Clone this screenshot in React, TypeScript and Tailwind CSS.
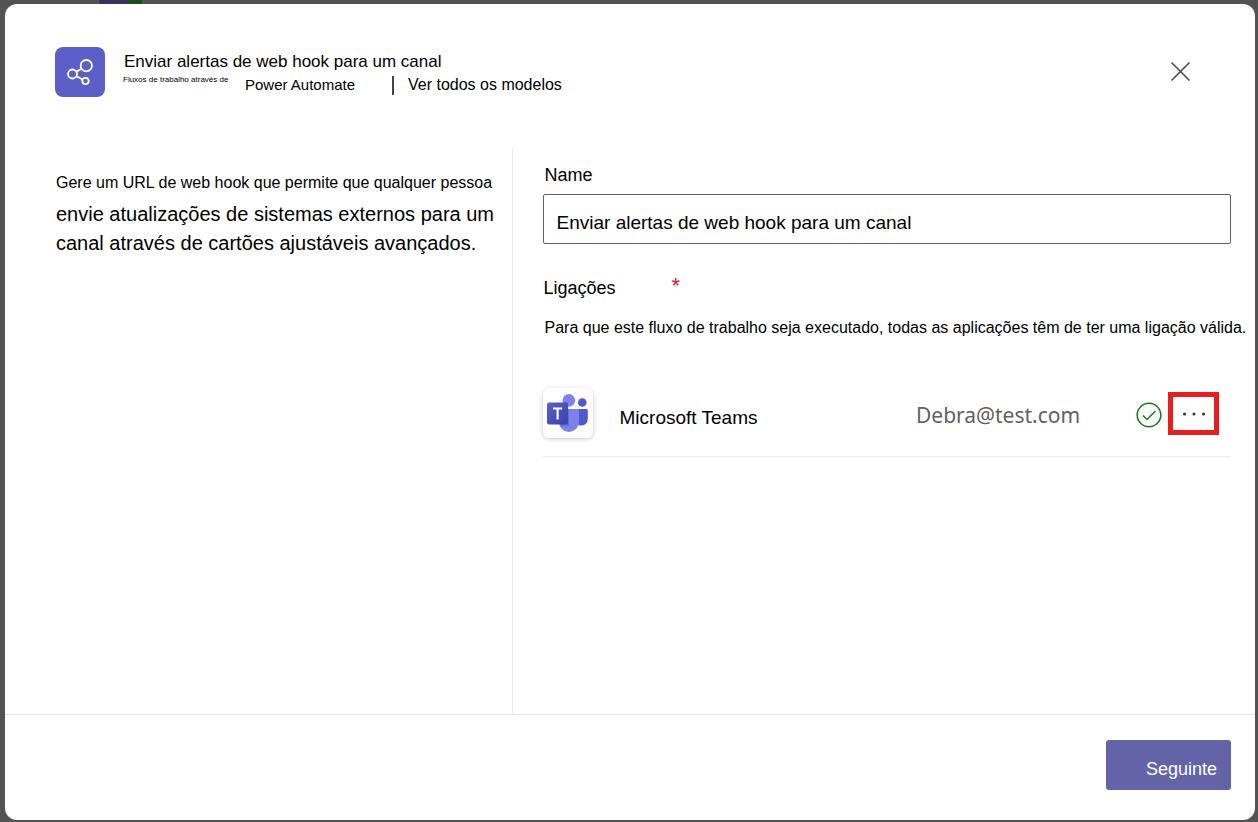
import React from 'react';

function WorkflowIcon() {
  return (
    <svg viewBox="0 0 50 50" className="size-[50px] shrink-0" aria-hidden="true">
      <rect width="50" height="50" rx="8" fill="#5b5fc7" />
      <g fill="none" stroke="#fff" strokeWidth="1.8">
        <circle cx="31.3" cy="18.7" r="5.7" />
        <circle cx="17.5" cy="27" r="4.5" />
        <circle cx="30.5" cy="34" r="3.2" />
        <path d="M21.4 24.7 26.4 21.7M21.5 29.2 27.6 32.5" />
      </g>
    </svg>
  );
}

function TeamsIcon() {
  return (
    <svg viewBox="0 0 50 50" className="size-[50px]" aria-hidden="true">
      <defs>
        <linearGradient id="tile" x1="0" y1="0" x2="1" y2="1">
          <stop offset="0" stopColor="#5a62c3" />
          <stop offset="1" stopColor="#3940ab" />
        </linearGradient>
      </defs>
      <circle cx="39.300" cy="14.500" r="4.300" fill="#5059c9" />
      <path d="M33 21h10.200c1 0 1.600.6 1.600 1.600V31a6.600 6.600 0 0 1-6.600 6.600c-3 0-5.200-2-5.200-5z" fill="#5059c9" />
      <circle cx="25.800" cy="12.400" r="6.300" fill="#7b83eb" />
      <path d="M16 21h18.300c1 0 1.700.7 1.700 1.700v11.100A10.200 10.200 0 0 1 25.800 44 10.200 10.200 0 0 1 16 34z" fill="#7b83eb" />
      <path d="M16 21h10v15.500c0 1.200-.9 2-2 2h-7c-.7-1.400-1-3-1-4.500zM19.500 14H25v3.500a6 6 0 0 1-5.500-3.500z" fill="#4b53bc" opacity=".45" />
      <rect x="4" y="14.500" width="21" height="22" rx="2" fill="url(#tile)" />
      <path d="M10 19.500h9.200v2.100H15.700v10h-2.200v-10H10z" fill="#fff" />
    </svg>
  );
}

export default function App() {
  return (
    <div className="relative flex min-h-screen flex-col bg-[#535353] pt-1 pr-[3px] pb-0.5 pl-[5px] font-['Liberation_Sans',Arial,sans-serif] text-black">
      <div className="absolute top-0 left-[99px] flex h-1" aria-hidden="true">
        <span className="w-[29px] bg-[#363360]" />
        <span className="w-3.5 bg-[#1d4d1d]" />
      </div>
      <main role="dialog" aria-labelledby="dialog-title" className="relative flex grow flex-col rounded-xl bg-white">
        <header className="flex h-36 items-start pt-[43px] pr-[62px] pl-[50px]">
          <WorkflowIcon />
          <div className="ml-[18px] grow whitespace-nowrap">
            <h1 id="dialog-title" className="pt-[5px] pl-px text-[17px] leading-5">
              Enviar alertas de web hook para um canal
            </h1>
            <div className="flex items-start">
              <span className="w-[122px] text-[8px] leading-4">Fluxos de trabalho através de</span>
              <a href="#power-automate" className="w-[147px] pt-[3px] text-[15px] leading-5">Power Automate</a>
              <span className="mt-1 h-[19px] w-0.5 bg-[#444]" />
              <a href="#modelos" className="ml-[14px] pt-[3px] text-[16px] leading-5">Ver todos os modelos</a>
            </div>
          </div>
          <button type="button" aria-label="Fechar" className="mt-[13px] flex size-6 items-center justify-center">
            <svg viewBox="0 0 24 24" className="size-6" fill="none" stroke="#444" strokeWidth="1.500">
              <path d="m2.500 2.500 18 18M20.500 2.500l-18 18" />
            </svg>
          </button>
        </header>

        <div className="flex grow">
          <section className="w-[40.6%] shrink-0 border-r border-[#ececec] pt-[25px] pl-[51px] whitespace-nowrap">
            <p className="text-[16px] leading-5">Gere um URL de web hook que permite que qualquer pessoa</p>
            <p className="pt-[7px] text-[20px] leading-[29px]">
              envie atualizações de sistemas externos para um
              <br />
              canal através de cartões ajustáveis avançados.
            </p>
          </section>

          <section className="min-w-0 grow pt-[15px] pr-6 pl-[30px]">
            <label htmlFor="flow-name" className="block pl-0.5 text-[18px] leading-6">Name</label>
            <input
              id="flow-name"
              type="text"
              defaultValue="Enviar alertas de web hook para um canal"
              className="mt-[7px] block h-[50px] w-full rounded-xs border border-[#616161] px-[13px] pt-2 text-[19px]"
            />
            <h2 className="mt-8 flex pl-px text-[18px] leading-6">
              Ligações
              <span className="ml-14 text-[22px] leading-5 text-[#e81123]">*</span>
            </h2>
            <p className="mt-4 pl-0.5 text-[16px] leading-6 whitespace-nowrap">
              Para que este fluxo de trabalho seja executado, todas as aplicações têm de ter uma ligação válida.
            </p>
            <div className="mt-12 flex h-[69px] items-start border-b border-[#ececec]">
              <div className="size-[50px] shrink-0 rounded-md bg-white shadow-[0_1px_4px_rgba(0,0,0,0.22)]">
                <TeamsIcon />
              </div>
              <span className="ml-[27px] grow pt-[18px] text-[19px] leading-6">Microsoft Teams</span>
              <span className="w-[220px] pt-[11px] font-['Noto_Sans',sans-serif] text-[21px] leading-8 text-[#616161]">Debra@test.com</span>
              <svg viewBox="0 0 26 26" className="mt-3.5 size-[26px] shrink-0" fill="none" stroke="#107c10" strokeWidth="1.500" role="img" aria-label="Ligado">
                <circle cx="13" cy="13" r="11.800" />
                <path d="m7 13.500 4 4 8.500-8.500" />
              </svg>
              <button type="button" aria-label="Mais opções" className="mt-1 mr-3 ml-1.5 flex h-[43px] w-[51px] shrink-0 items-center justify-center border-5 border-[#e81e1e]">
                <svg viewBox="0 0 24 4" className="h-1 w-6" fill="#333">
                  <circle cx="2.500" cy="2" r="1.500" />
                  <circle cx="12" cy="2" r="1.500" />
                  <circle cx="21.500" cy="2" r="1.500" />
                </svg>
              </button>
            </div>
          </section>
        </div>

        <footer className="flex h-[106px] justify-end border-t border-[#e6e6e6] pt-[25px] pr-6">
          <button type="button" className="h-[50px] w-[125px] rounded-[3px] bg-[#6264a7] pt-2 pr-3.5 text-right text-[18px] text-white">
            Seguinte
          </button>
        </footer>
      </main>
    </div>
  );
}
